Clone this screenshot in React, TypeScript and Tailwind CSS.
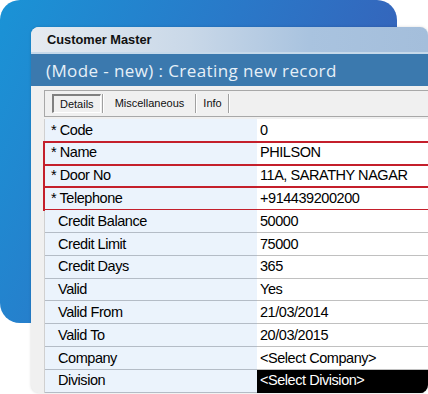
import React from "react";

type Row = { label: string; star?: boolean; value: string; red?: boolean; dark?: boolean };

const rows: Row[] = [
  { label: "Code", star: true, value: "0" },
  { label: "Name", star: true, value: "PHILSON", red: true },
  { label: "Door No", star: true, value: "11A, SARATHY NAGAR", red: true },
  { label: "Telephone", star: true, value: "+914439200200", red: true },
  { label: "Credit Balance", value: "50000" },
  { label: "Credit Limit", value: "75000" },
  { label: "Credit Days", value: "365" },
  { label: "Valid", value: "Yes" },
  { label: "Valid From", value: "21/03/2014" },
  { label: "Valid To", value: "20/03/2015" },
  { label: "Company", value: "<Select Company>" },
  { label: "Division", value: "<Select Division>", dark: true },
];

export default function App() {
  return (
    <div
      className="relative w-[428px] h-[394px] bg-white overflow-hidden"
      style={{ fontFamily: '"Liberation Sans", Arial, sans-serif' }}
    >
      <div className="absolute left-0 top-0 w-[397px] h-[323px] rounded-[20px] bg-[linear-gradient(115deg,#1a93d6_0%,#2a78c8_45%,#3d57b2_100%)]" />
      <div className="relative ml-[31px] mt-[27px] w-[397px] h-[366px] rounded-[8px] overflow-hidden bg-[#f0f0f0] shadow-[0_0_3px_rgba(0,0,0,0.15)] flex flex-col">
        <div className="h-[25px] shrink-0 flex items-center pl-[16px] pt-[1px] bg-[linear-gradient(90deg,#e6ebf1_0%,#c9d8e8_40%,#a9c3df_70%,#a4bedb_100%)]">
          <span className="text-[12.8px] font-bold text-[#111] leading-none">Customer Master</span>
        </div>
        <div className="h-[2px] shrink-0 bg-[#c6d9ea]" />
        <div className="h-[32px] shrink-0 flex items-center pl-[15px] bg-[#3b79ae]">
          <span
            className="text-[17px] text-[#e6f0f8] leading-none tracking-[0.4px]"
            style={{ fontFamily: '"Open Sans", "DejaVu Sans", sans-serif' }}
          >
            (Mode - new) : Creating new record
          </span>
        </div>
        <div className="flex-1 flex flex-col pl-[13px]">
          <div className="h-[33px] shrink-0 pt-[4px] pb-[2px]">
            <div className="h-full border-t border-l border-b border-[#a8a8a8] flex items-center pl-[7px] text-[11px] text-[#111]">
              <div className="h-[19px] flex items-center px-[6px] border-t-[2px] border-l-[2px] border-[#808080] border-b border-r border-b-white border-r-white">
                Details
              </div>
              <div className="w-px h-[19px] bg-[#a0a0a0] ml-[1px]" />
              <div className="w-px h-[19px] bg-white" />
              <div className="px-[11px]">Miscellaneous</div>
              <div className="w-px h-[19px] bg-[#a0a0a0]" />
              <div className="w-px h-[19px] bg-white" />
              <div className="px-[6px]">Info</div>
              <div className="w-px h-[19px] bg-[#a0a0a0]" />
              <div className="w-px h-[19px] bg-white" />
            </div>
          </div>
          <div className="border-l border-[#d0d0d0] flex flex-col">
            {rows.map((r) => (
              <div key={r.label} className="relative h-[22.8px] flex text-[14.5px] tracking-[-0.45px] text-black leading-none">
                <div
                  className={
                    "w-[212px] shrink-0 bg-[#ebf3fc] border-b border-[#b4bcc6] flex items-center " +
                    (r.star ? "pl-[6px]" : "pl-[13px]")
                  }
                >
                  {r.star ? "* " : ""}
                  {r.label}
                </div>
                <div
                  className={
                    "flex-1 flex items-center pl-[3px] border-b " +
                    (r.dark ? "bg-black text-white border-black" : "bg-white border-[#c0c0c0]")
                  }
                >
                  {r.value}
                </div>
                {r.red ? (
                  <div className="absolute -left-[2px] -top-[1px] -right-[4px] -bottom-[1px] border-[2.5px] border-[#c41f2b] pointer-events-none" />
                ) : null}
              </div>
            ))}
          </div>
        </div>
      </div>
    </div>
  );
}
